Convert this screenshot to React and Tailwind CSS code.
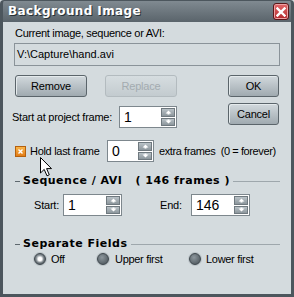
import React from "react";

function Btn({ children, className = "", disabled = false }) {
  return (
    <div
      className={
        disabled
          ? `h-[22px] flex items-center justify-center rounded-[3px] border border-[#b3bbbf] bg-gradient-to-b from-[#d6dde0] to-[#c3cbcf] text-[#a3abb0] text-[11px] tracking-[-0.2px] ${className}`
          : `h-[22px] flex items-center justify-center rounded-[3px] border border-[#5b656b] bg-gradient-to-b from-[#d2d9dd] to-[#a0aab0] shadow-[inset_1px_1px_0_#e4eaec] text-black text-[11px] tracking-[-0.2px] ${className}`
      }
    >
      {children}
    </div>
  );
}

function Arrow({ down = false }) {
  return (
    <svg width="7" height="5" viewBox="0 0 7 5" className={down ? "rotate-180" : ""}>
      <path d="M3.5 0.5 L6.5 3.5 L4.5 3.5 L4.5 4.5 L2.5 4.5 L2.5 3.5 L0.5 3.5 Z" fill="#ffffff" />
    </svg>
  );
}

function Spin({ value, className = "" }) {
  return (
    <div className={`h-[22px] flex bg-white border border-[#7d878d] ${className}`}>
      <div className="flex-1 pl-[4px] text-[14px] leading-[20px]">{value}</div>
      <div className="w-[15px] flex flex-col gap-[1px] py-[1px] pr-[1px]">
        <div className="h-[9px] flex items-center justify-center bg-gradient-to-b from-[#b9c2c7] to-[#8c969c] border border-[#6f797f]">
          <Arrow />
        </div>
        <div className="h-[9px] flex items-center justify-center bg-gradient-to-b from-[#b9c2c7] to-[#8c969c] border border-[#6f797f]">
          <Arrow down />
        </div>
      </div>
    </div>
  );
}

function Header({ children }) {
  return (
    <div className="flex items-center ml-[12px] mr-[11px] h-[14px]">
      <div className="w-[5px] h-px bg-[#5e686e]" />
      <span className="ml-[3px] font-['DejaVu_Sans',sans-serif] font-bold text-[11px] leading-[14px] tracking-[0.5px] text-black whitespace-pre">
        {children}
      </span>
      <div className="flex-1 ml-[3px] h-px bg-[#9ea7ac]" />
    </div>
  );
}

function Radio({ checked }) {
  return (
    <div className="w-[12px] h-[12px] rounded-full border border-[#3e474d] bg-[radial-gradient(circle_at_40%_35%,#8d979d,#454e54)] flex items-center justify-center shadow-[0_0_0_1px_#bcc4c8]">
      {checked && <div className="w-[4px] h-[4px] rounded-full bg-white shadow-[0_0_2px_1px_#ffffff]" />}
    </div>
  );
}

export default function App() {
  return (
    <div className="relative w-[294px] h-[297px] flex flex-col bg-[#d4dbde] font-['Liberation_Sans',Arial,sans-serif] text-[11px] leading-[13px] text-black whitespace-nowrap">
      <div className="h-[22px] flex items-center justify-between bg-gradient-to-b from-[#808a91] to-[#5a646b] border-x-[3px] border-t border-[#4c565d] rounded-t-[4px] pl-[5px] pr-[2px]">
        <span className="font-['DejaVu_Sans',sans-serif] font-bold text-[12px] tracking-[0.4px] text-white [text-shadow:1px_1px_0_#263035]">
          Background Image
        </span>
        <div className="w-[16px] h-[17px] rounded-[3px] border border-[#5b1719] bg-gradient-to-b from-[#e2686b] to-[#b3262b] shadow-[inset_0_0_0_1px_#eca1a3] flex items-center justify-center">
          <svg width="10" height="10" viewBox="0 0 10 10">
            <path d="M1.5 1.5 L8.5 8.5 M8.5 1.5 L1.5 8.5" stroke="#ffffff" strokeWidth="2.4" strokeLinecap="square" />
          </svg>
        </div>
      </div>

      <div className="flex-1 flex flex-col border-x-[3px] border-b-[3px] border-[#4c565d]">
        <div className="ml-[12px] mt-[5px] tracking-[-0.3px]">Current image, sequence or AVI:</div>
        <div className="ml-[11px] mt-[3px] w-[266px] h-[23px] border border-[#8a9399] flex items-center pl-[2px] text-[11px]">
          V:\Capture\hand.avi
        </div>

        <div className="flex mt-[9px]">
          <div className="flex flex-col">
            <div className="flex ml-[12px] gap-[18px]">
              <Btn className="w-[72px]">Remove</Btn>
              <Btn className="w-[72px]" disabled>Replace</Btn>
            </div>
            <div className="flex items-center ml-[9px] mt-[9px]">
              <div className="w-[107px] tracking-[-0.25px]">Start at project frame:</div>
              <Spin value="1" className="w-[58px]" />
            </div>
          </div>
          <div className="ml-auto mr-[12px] flex flex-col gap-[6px]">
            <Btn className="w-[51px]">OK</Btn>
            <Btn className="w-[51px]">Cancel</Btn>
          </div>
        </div>

        <div className="flex items-center ml-[12px] mt-[12px]">
          <div className="w-[11px] h-[11px] border border-[#b4600e] bg-gradient-to-b from-[#f9b548] to-[#e27c12] flex items-center justify-center">
            <svg width="5" height="5" viewBox="0 0 5 5">
              <path d="M0.5 0.5 L4.5 4.5 M4.5 0.5 L0.5 4.5" stroke="#ffffff" strokeWidth="1.4" />
            </svg>
          </div>
          <div className="ml-[4px] w-[77px] tracking-[-0.3px]">Hold last frame</div>
          <Spin value="0" className="w-[47px]" />
          <div className="ml-[5px] tracking-[-0.4px] whitespace-pre">extra frames  (0 = forever)</div>
        </div>

        <div className="mt-[12px]">
          <Header>{"Sequence / AVI   ( 146 frames )"}</Header>
        </div>

        <div className="flex items-center mt-[6px]">
          <div className="ml-[31px] w-[29px] tracking-[-0.2px]">Start:</div>
          <Spin value="1" className="w-[59px]" />
          <div className="ml-[38px] w-[31px] tracking-[-0.2px]">End:</div>
          <Spin value="146" className="w-[59px]" />
        </div>

        <div className="mt-[21px]">
          <Header>Separate Fields</Header>
        </div>

        <div className="flex items-center mt-[1px] h-[14px] tracking-[-0.3px]">
          <div className="ml-[31px] w-[63px] flex items-center gap-[5px]">
            <Radio checked />
            <span>Off</span>
          </div>
          <div className="w-[92px] flex items-center gap-[6px]">
            <Radio />
            <span>Upper first</span>
          </div>
          <div className="flex items-center gap-[5px]">
            <Radio />
            <span>Lower first</span>
          </div>
        </div>
      </div>

      <svg className="absolute left-[40px] top-[157px]" width="13" height="20" viewBox="0 0 13 20">
        <path d="M0.5 0.5 L0.5 16 L4.2 12.4 L7 18.8 L9.3 17.8 L6.6 11.6 L11.5 11.6 Z" fill="#ffffff" stroke="#000000" strokeWidth="1" strokeLinejoin="miter" />
      </svg>
    </div>
  );
}
